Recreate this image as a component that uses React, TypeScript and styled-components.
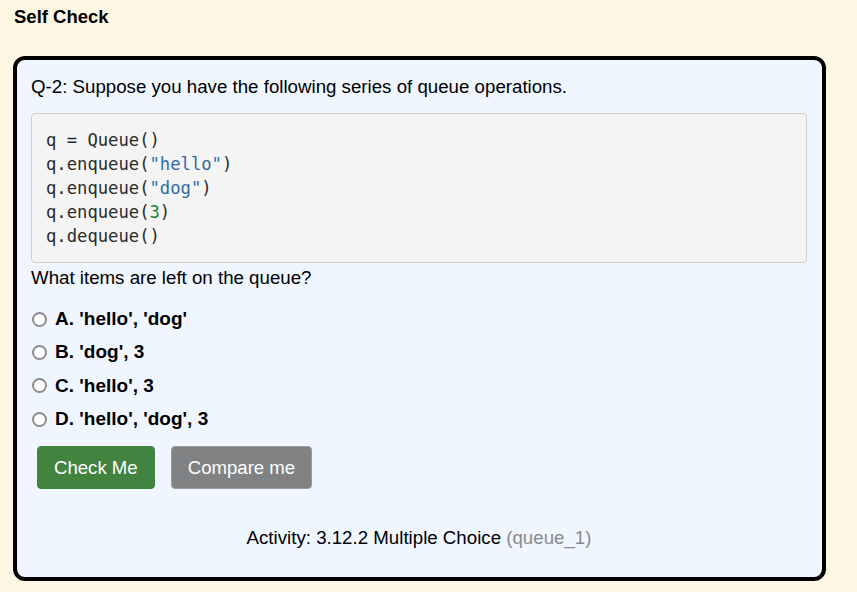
import styled, { createGlobalStyle } from 'styled-components';

const GlobalStyle = createGlobalStyle`
  body {
    margin: 0;
    background: #ffffff;
    font-family: "Liberation Sans", Arial, sans-serif;
    color: #000;
  }
`;

const options = [
  { key: 'A', text: "'hello', 'dog'" },
  { key: 'B', text: "'dog', 3" },
  { key: 'C', text: "'hello', 3" },
  { key: 'D', text: "'hello', 'dog', 3" },
];

function App() {
  return (
    <Page>
      <GlobalStyle />
      <Heading>Self Check</Heading>
      <Card>
        <Question>Q-2: Suppose you have the following series of queue operations.</Question>
        <CodeBlock>
          <div>q = Queue()</div>
          <div>
            q.enqueue(<Str>"hello"</Str>)
          </div>
          <div>
            q.enqueue(<Str>"dog"</Str>)
          </div>
          <div>
            q.enqueue(<Num>3</Num>)
          </div>
          <div>q.dequeue()</div>
        </CodeBlock>
        <Prompt>What items are left on the queue?</Prompt>
        <OptionList>
          {options.map((o) => (
            <OptionRow key={o.key}>
              <Radio type='radio' name='queue_1' />
              <OptionText>
                {o.key}. {o.text}
              </OptionText>
            </OptionRow>
          ))}
        </OptionList>
        <ButtonRow>
          <Button variant='success'>Check Me</Button>
          <Button variant='muted'>Compare me</Button>
        </ButtonRow>
        <Footer>
          Activity: 3.12.2 Multiple Choice <Id>(queue_1)</Id>
        </Footer>
      </Card>
    </Page>
  );
}

const Page = styled.div`
  background: #fdf6e3;
  height: 592px;
  box-sizing: border-box;
  padding: 7px 31px 0 13px;
`;

const Heading = styled.div`
  font-size: 18.5px;
  font-weight: bold;
  line-height: 20px;
  padding-left: 1px;
  margin-bottom: 29px;
`;

const Card = styled.div`
  background: #eff6ff;
  border: 4px solid #000;
  border-radius: 12px;
  height: 525px;
  box-sizing: border-box;
  padding: 15px 15px 0 14px;
`;

const Question = styled.div`
  font-size: 18.7px;
  line-height: 24px;
  margin-bottom: 14px;
`;

const CodeBlock = styled.div`
  background: #f4f4f4;
  border: 1px solid #cfcfcf;
  border-radius: 4px;
  padding: 14px 14px 14px;
  font-family: "DejaVu Sans Mono", Menlo, monospace;
  font-size: 17.2px;
  line-height: 24px;
  color: #2b2b2b;
`;

const Str = styled.span`
  color: #2e6ca6;
`;

const Num = styled.span`
  color: #19833e;
`;

const Prompt = styled.div`
  font-size: 18.7px;
  line-height: 24px;
  margin-top: 3px;
`;

const OptionList = styled.div`
  display: flex;
  flex-direction: column;
  gap: 9.4px;
  margin-top: 17px;
`;

const OptionRow = styled.label`
  display: flex;
  align-items: center;
  gap: 8px;
  height: 24px;
  padding-left: 1px;
`;

const Radio = styled.input`
  appearance: none;
  margin: 0;
  width: 15px;
  height: 15px;
  border: 2px solid #8c8c8c;
  border-radius: 50%;
  background: #fff;
  box-sizing: border-box;
`;

const OptionText = styled.span`
  font-size: 19px;
  font-weight: bold;
`;

const ButtonRow = styled.div`
  display: flex;
  gap: 16px;
  margin-top: 15px;
  padding-left: 6px;
`;

const Button = styled.button<{ variant: 'success' | 'muted' }>`
  font-family: "Liberation Sans", Arial, sans-serif;
  font-size: 18.6px;
  color: #fff;
  height: 43px;
  padding: 0 16px;
  border-radius: 4px;
  border: 1px solid ${(p) => (p.variant === 'success' ? '#3d8a3f' : '#9a9c9e')};
  background: ${(p) => (p.variant === 'success' ? '#41833f' : '#808284')};
`;

const Footer = styled.div`
  text-align: center;
  font-size: 18.7px;
  line-height: 24px;
  margin-top: 37px;
`;

const Id = styled.span`
  color: #8a8a8a;
`;

export default App;
